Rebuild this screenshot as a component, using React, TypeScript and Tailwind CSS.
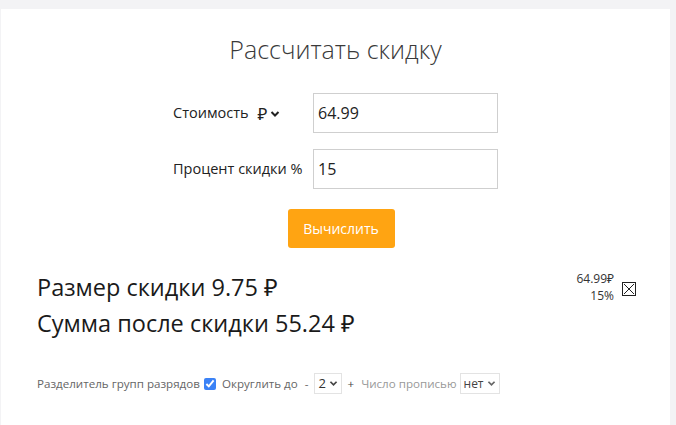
import React, { useState } from "react";

const font = { fontFamily: '"Open Sans", "Noto Sans", sans-serif' };

export default function App() {
  const [price, setPrice] = useState("64.99");
  const [pct, setPct] = useState("15");
  const [sep, setSep] = useState(true);

  return (
    <div className="min-h-[425px] bg-[#f3f3f5] pt-[9px] pl-[1px]" style={font}>
      <div className="w-[669px] min-h-[416px] bg-white text-[#333]">
        <h1 className="pt-[22px] text-center text-[25px] font-light leading-[36px] text-[#3a3a3a]">
          Рассчитать скидку
        </h1>

        <div className="mt-[26px] ml-[172px] flex flex-col gap-[16px]">
          <div className="flex items-center">
            <div className="flex w-[140px] items-center text-[14.5px] text-[#222]">
              <span>Стоимость</span>
              <span className="ml-[9px] text-[17px] leading-none">₽</span>
              <svg width="10" height="8" viewBox="0 0 10 8" className="ml-[2px] mt-[1px]">
                <path d="M1.5 2 L5 5.5 L8.5 2" fill="none" stroke="#222" strokeWidth="2" />
              </svg>
            </div>
            <input
              value={price}
              onChange={(e) => setPrice(e.target.value)}
              className="h-[40px] w-[185px] border border-[#cfcfcf] px-[4px] text-[16px] text-[#222] outline-none"
            />
          </div>
          <div className="flex items-center">
            <div className="w-[140px] text-[14.5px] text-[#222]">Процент скидки %</div>
            <input
              value={pct}
              onChange={(e) => setPct(e.target.value)}
              className="h-[40px] w-[185px] border border-[#cfcfcf] px-[4px] text-[16px] text-[#222] outline-none"
            />
          </div>
        </div>

        <div className="mt-[20px] flex justify-center pl-[11px]">
          <button className="h-[39px] w-[107px] rounded-[3px] bg-[#ffa412] text-[14px] text-white">
            Вычислить
          </button>
        </div>

        <div className="mt-[21px] flex pl-[36px] pr-[34px]">
          <div className="flex-1 text-[23.5px] leading-[36px] text-[#1a1a1a]">
            <div>Размер скидки 9.75 ₽</div>
            <div>Сумма после скидки 55.24 ₽</div>
          </div>
          <div className="flex items-start pt-[1px]">
            <div className="text-right text-[12px] leading-[17px] text-[#333]">
              <div>64.99₽</div>
              <div>15%</div>
            </div>
            <div className="ml-[8px] mt-[12px] flex h-[14px] w-[14px] items-center justify-center border border-[#222]">
              <svg width="12" height="12" viewBox="0 0 12 12">
                <path d="M1 1 L11 11 M11 1 L1 11" stroke="#222" strokeWidth="1" />
              </svg>
            </div>
          </div>
        </div>

        <div className="mt-[32px] flex items-center pl-[36px] text-[11.6px] text-[#666]">
          <span>Разделитель групп разрядов</span>
          <input
            type="checkbox"
            checked={sep}
            onChange={() => setSep(!sep)}
            className="ml-[4px] h-[12px] w-[12px] accent-[#3b82f6]"
          />
          <span className="ml-[6px]">Округлить до</span>
          <span className="ml-[7px]">-</span>
          <div className="ml-[6px] flex h-[21px] w-[28px] items-center border border-[#e3e3e3] px-[3px] text-[13px] text-[#333]">
            2
            <svg width="9" height="7" viewBox="0 0 10 8" className="ml-[3px]">
              <path d="M1.5 2 L5 5.5 L8.5 2" fill="none" stroke="#444" strokeWidth="2" />
            </svg>
          </div>
          <span className="ml-[5px] text-[#444]">+</span>
          <span className="ml-[7px] text-[#999]">Число прописью</span>
          <div className="ml-[3px] flex h-[21px] w-[40px] items-center border border-[#e3e3e3] px-[3px] text-[12px] text-[#444]">
            нет
            <svg width="9" height="7" viewBox="0 0 10 8" className="ml-[3px]">
              <path d="M1.5 2 L5 5.5 L8.5 2" fill="none" stroke="#666" strokeWidth="2" />
            </svg>
          </div>
        </div>
      </div>
    </div>
  );
}
